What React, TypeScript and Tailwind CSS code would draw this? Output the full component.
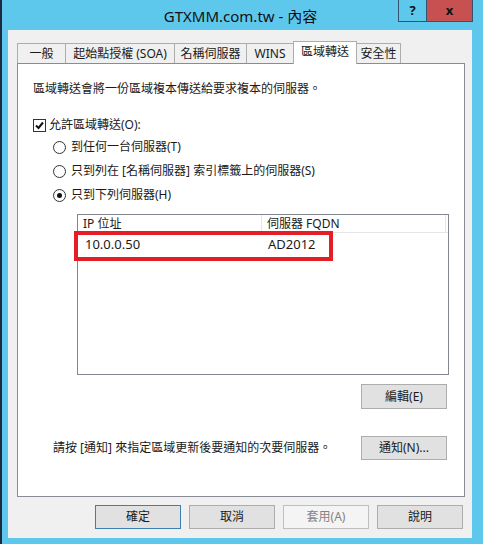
import React from 'react';

const font = { fontFamily: '"Noto Sans", "Noto Sans CJK TC", sans-serif' };

interface BtnProps {
    label: string;
    disabled?: boolean;
    focused?: boolean;
    className?: string;
}

function Button({ label, disabled = false, focused = false, className = '' }: BtnProps) {
    const border = focused ? 'border-[#3c7fb1]' : disabled ? 'border-[#bfbfbf]' : 'border-[#adadad]';
    const bg = disabled ? 'bg-[#f4f4f4]' : 'bg-[#e1e1e1]';
    const text = disabled ? 'text-[#838383]' : 'text-[#1a1a1a]';
    return (
        <div
            className={`flex items-center justify-center shrink-0 border ${border} ${bg} ${text} text-[12px] w-[86px] h-[24px] ${className}`}
        >
            {label}
        </div>
    );
}

const tabs = ['一般', '起始點授權 (SOA)', '名稱伺服器', 'WINS', '區域轉送', '安全性'];
const tabWidths = ['w-[49px]', 'w-[110px]', 'w-[73px]', 'w-[48px]', 'w-[64px]', 'w-[45px]'];

function Radio({ checked, label }: { checked?: boolean; label: string }) {
    return (
        <div className="flex items-center h-[24px]">
            <div className="w-[13px] h-[13px] rounded-full border border-[#333] bg-white flex items-center justify-center">
                {checked && <div className="w-[5px] h-[5px] rounded-full bg-[#111]" />}
            </div>
            <span className="ml-[5px]">{label}</span>
        </div>
    );
}

export default function App() {
    return (
        <div className="w-[483px] h-[544px] bg-[#5ec7ec] border-l-2 border-[#1e2a44] flex flex-col text-[#1a1a1a]" style={font}>
            {/* title bar */}
            <div className="relative h-[30px] flex items-center justify-center shrink-0">
                <span className="text-[15px] text-[#111] -ml-[4px] mt-[2px]">GTXMM.com.tw - 內容</span>
                <div className="absolute top-0 left-[396px] flex h-[22px] border border-t-0 border-[#35536e]">
                    <div className="w-[28px] flex items-center justify-center font-bold text-[13px] text-[#111] border-r border-[#35536e]">?</div>
                    <div className="w-[45px] flex items-center justify-center bg-[#c75050] font-bold text-[13px] text-[#111]">x</div>
                </div>
            </div>

            {/* client area */}
            <div className="ml-[6px] w-[464px] h-[508px] bg-[#f0f0f0] flex flex-col pl-[9px] text-[12px]">
                {/* tabs */}
                <div className="flex items-end h-[32px] mt-[1px]">
                    {tabs.map((t, i) => {
                        const sel = i === 4;
                        return (
                            <div
                                key={t}
                                className={`${tabWidths[i]} flex items-center justify-center border border-[#adadad] border-b-0 ${
                                    sel ? 'h-[23px] bg-white -mb-px relative z-10 pb-[3px]' : 'h-[20px] bg-[#f0f0f0]'
                                } ${i > 0 ? '-ml-px' : ''}`}
                            >
                                {t}
                            </div>
                        );
                    })}
                </div>

                {/* panel */}
                <div className="w-[448px] h-[434px] bg-white border border-[#898c95] flex flex-col pl-[15px]">
                    <div className="mt-[16px]">區域轉送會將一份區域複本傳送給要求複本的伺服器。</div>

                    <div className="flex items-center mt-[16px] h-[22px]">
                        <div className="w-[13px] h-[13px] border border-[#333] bg-white flex items-center justify-center">
                            <svg width="11" height="11" viewBox="0 0 11 11">
                                <path d="M2 5.5 L4.5 8 L9 2.5" stroke="#111" strokeWidth="2" fill="none" />
                            </svg>
                        </div>
                        <span className="ml-[3px]">允許區域轉送(O):</span>
                    </div>

                    <div className="flex flex-col pl-[20px] mt-[-1px]">
                        <Radio label="到任何一台伺服器(T)" />
                        <Radio label="只到列在 [名稱伺服器] 索引標籤上的伺服器(S)" />
                        <Radio checked label="只到下列伺服器(H)" />
                    </div>

                    {/* list */}
                    <div className="relative ml-[44px] mt-[7px] w-[372px] h-[161px] border border-[#828790] bg-white">
                        <div className="flex h-[18px] border-b border-[#e5e5e5]">
                            <div className="w-[184px] pl-[5px] border-r border-[#e5e5e5] leading-[18px]">IP 位址</div>
                            <div className="w-[184px] pl-[5px] border-r border-[#e5e5e5] leading-[18px]">伺服器 FQDN</div>
                        </div>
                        <div className="flex h-[24px] items-center">
                            <div className="w-[184px] pl-[7px] text-[13px]">10.0.0.50</div>
                            <div className="pl-[6px] text-[13px]">AD2012</div>
                        </div>
                        <div className="absolute left-[-4px] top-[16px] w-[259px] h-[30px] border-[4px] border-[#e31e24]" />
                    </div>

                    <div className="flex justify-end pr-[17px] mt-[9px]">
                        <Button label="編輯(E)" className="h-[25px]" />
                    </div>

                    <div className="flex items-center pl-[20px] pr-[17px] mt-[27px]">
                        <div className="whitespace-nowrap">請按 [通知] 來指定區域更新後要通知的次要伺服器。</div>
                        <div className="ml-auto">
                            <Button label="通知(N)..." />
                        </div>
                    </div>
                </div>

                {/* bottom buttons */}
                <div className="flex gap-[8px] mt-[8px] pl-[78px]">
                    <Button label="確定" focused />
                    <Button label="取消" />
                    <Button label="套用(A)" disabled />
                    <Button label="說明" />
                </div>
            </div>
        </div>
    );
}
